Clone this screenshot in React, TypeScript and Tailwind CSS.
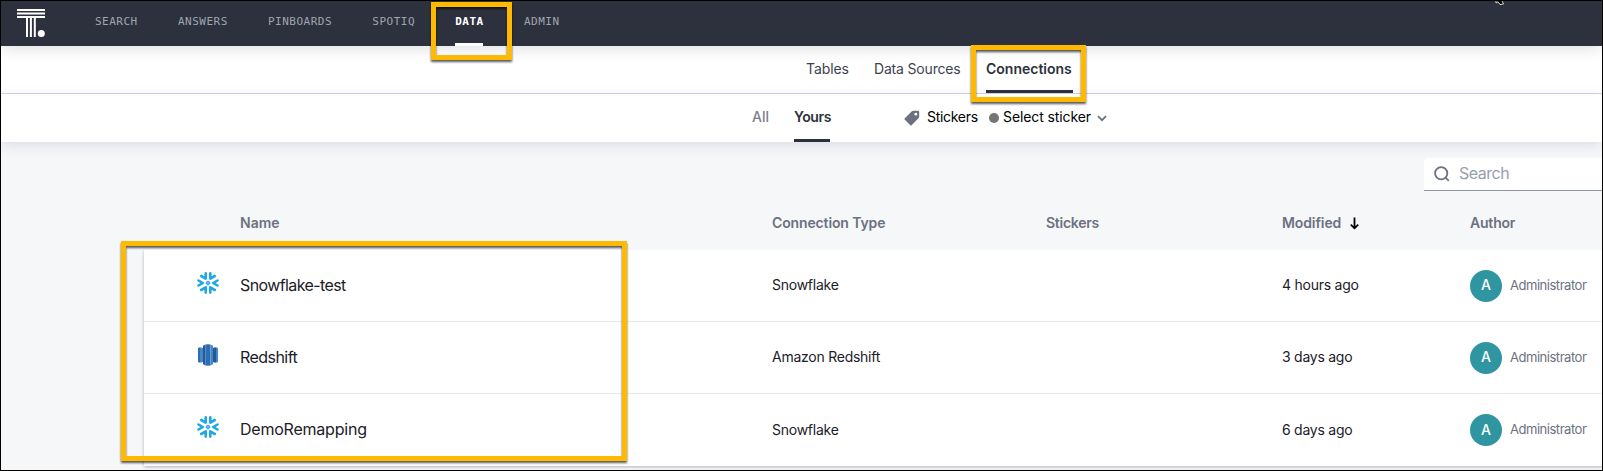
import React from "react";

const NAV = ["SEARCH", "ANSWERS", "PINBOARDS", "SPOTIQ", "DATA", "ADMIN"];

const ROWS = [
  { name: "Snowflake-test", type: "Snowflake", modified: "4 hours ago", spacing: "tracking-[-0.6px]" },
  { name: "Redshift", type: "Amazon Redshift", modified: "3 days ago", spacing: "tracking-[-0.55px]" },
  { name: "DemoRemapping", type: "Snowflake", modified: "6 days ago", spacing: "tracking-[-0.22px]" },
];

const COLS = "grid grid-cols-[96px_532px_274px_236px_188px_1fr]";

function Logo() {
  return (
    <svg width="28" height="28" viewBox="0 0 28 28" className="block">
      <g fill="#fff">
        <rect x="0" y="0" width="28" height="2" />
        <rect x="0" y="3.5" width="28" height="2" />
        <rect x="0" y="7" width="28" height="2" />
        <rect x="9" y="8" width="2" height="20" />
        <rect x="12.9" y="8" width="2" height="20" />
        <rect x="16.8" y="8" width="2" height="20" />
        <circle cx="24.3" cy="24.4" r="3.5" />
      </g>
    </svg>
  );
}

function SnowflakeIcon() {
  return (
    <svg width="22" height="22" viewBox="0 0 22 22" className="block">
      <g fill="none" stroke="#1fa8e6" strokeWidth="2.6" strokeLinecap="round" strokeLinejoin="round">
        <path d="M8.7 1.4V6.6L4.2 4" />
        <path d="M13.3 1.4V6.6L17.8 4" />
        <path d="M8.7 20.6V15.4L4.2 18" />
        <path d="M13.3 20.6V15.4L17.8 18" />
        <path d="M1.5 8.5L5.8 11L1.5 13.5" />
        <path d="M20.5 8.5L16.2 11L20.5 13.5" />
      </g>
      <path d="M11 9.2L12.8 11L11 12.8L9.2 11Z" fill="none" stroke="#1fa8e6" strokeWidth="1.3" strokeLinejoin="round" />
    </svg>
  );
}

function RedshiftIcon() {
  return (
    <svg width="22" height="22" viewBox="0 0 22 22" className="block">
      <path d="M1 4L3 3.3V18.7L1 18Z" fill="#2e6db4" />
      <path d="M3 3.3L6 4V18L3 18.7Z" fill="#4686c6" />
      <path d="M21 4L19 3.3V18.7L21 18Z" fill="#4686c6" />
      <path d="M19 3.3L15 4V18L19 18.7Z" fill="#205b99" />
      <path d="M6 1.8L8.5 0.6V21.4L6 20.2Z" fill="#205b99" />
      <path d="M8.5 0.6L11 0.2L13.5 0.6V21.4L11 21.8L8.5 21.4Z" fill="#2e6db4" />
      <path d="M13.5 0.6L16 1.8V20.2L13.5 21.4Z" fill="#4686c6" />
    </svg>
  );
}

function Header() {
  return (
    <header className="relative z-10 flex h-[45px] shrink-0 bg-[#2c313d] pl-4 shadow-[0_3px_14px_rgba(0,0,0,0.12)]">
      <div className="w-[78px] pt-2">
        <Logo />
      </div>
      <nav className="flex gap-[40.2px] font-['DejaVu_Sans_Mono',monospace] text-[11px] tracking-[0.5px]">
        {NAV.map((n) => (
          <a
            key={n}
            className={
              n === "DATA"
                ? "flex h-[45px] flex-col justify-between font-bold text-white"
                : "flex h-[45px] flex-col justify-between text-[#a0a5b0]"
            }
          >
            <span className="pt-[13px] leading-4">{n}</span>
            {n === "DATA" && <span className="block h-[3px] w-7 bg-white" />}
          </a>
        ))}
      </nav>
    </header>
  );
}

function Author() {
  return (
    <div className="flex items-center gap-2">
      <span className="flex size-8 items-center justify-center rounded-full bg-[#2f96a1] pb-[2px] text-[14px] font-medium text-white">A</span>
      <span className="text-[13px] tracking-[-0.47px] text-[#6b7180]">Administrator</span>
    </div>
  );
}

export default function App() {
  return (
    <div className="relative h-[471px] w-[1603px] overflow-hidden border border-black bg-[#f6f7f9] font-['Inter',sans-serif] text-[14px] text-[#1c2029]">
      <div className="flex h-full flex-col">
        <Header />
        <div className="flex h-[48px] shrink-0 border-b border-[#d4d4e2] bg-white pl-[805px] text-[#3d4352]">
          <span className="w-[68px] pt-[13px] leading-5 tracking-[-0.1px]">Tables</span>
          <span className="w-[112px] pt-[13px] leading-5 tracking-[-0.18px]">Data Sources</span>
          <span className="flex w-[87px] flex-col justify-between pt-[13px] font-semibold leading-5 text-[#2c313d]">
            Connections
            <span className="block h-[3px] bg-[#2c313d]" />
          </span>
        </div>
        <div className="relative flex h-[48px] shrink-0 bg-white pl-[751px] leading-5 shadow-[0_3px_12px_rgba(44,49,90,0.13)]">
          <span className="w-[42px] pt-[13px] font-medium text-[#7a808d]">All</span>
          <span className="flex w-9 flex-col justify-between pt-[13px] font-semibold tracking-[-0.4px] text-[#2c313d]">
            Yours
            <span className="block h-[3px] bg-[#2c313d]" />
          </span>
          <div className="flex h-[46px] items-center pl-[74px] text-black">
            <svg width="16" height="16" viewBox="0 0 16 16" className="mt-[2px]">
              <path d="M0.6 8.6L7.6 1.4Q8.3 0.8 9.2 0.8H14Q15.2 0.8 15.2 2V6.5Q15.2 7.4 14.6 8L7.6 15.2Q7 15.7 6.4 15.2L0.6 9.6Q0.2 9.1 0.6 8.6Z" fill="#6b7180" />
              <circle cx="11.8" cy="4.2" r="1.4" fill="#fff" />
            </svg>
            <span className="w-[69px] pl-[7px] tracking-[-0.3px]">Stickers</span>
            <span className="mr-1 mt-[2px] block size-[10px] rounded-full bg-[#757575]" />
            <span className="w-[94px] whitespace-nowrap tracking-[-0.1px]">Select sticker</span>
            <svg width="10" height="7" viewBox="0 0 10 7" className="mt-[2px]">
              <path d="M1 1.2L5 5.2L9 1.2" fill="none" stroke="#6b7180" strokeWidth="1.8" />
            </svg>
          </div>
        </div>
        <div className="flex shrink-0 justify-end pt-4">
          <div className="flex h-[33px] w-[178px] items-center rounded-tl-sm border-b border-[#9197a8] bg-white pl-[10px]">
            <svg width="16" height="16" viewBox="0 0 16 16">
              <circle cx="7.2" cy="7.2" r="6.1" fill="none" stroke="#6b7180" strokeWidth="1.8" />
              <path d="M11.3 11.3L14.8 14.8" stroke="#6b7180" strokeWidth="1.8" />
            </svg>
            <span className="pb-[2px] pl-[9px] text-[16px] tracking-[-0.5px] text-[#989eae]">Search</span>
          </div>
        </div>
        <div className="relative z-10 flex h-[59px] shrink-0 flex-col bg-[#f6f7f9] pl-[143px] pt-[22px]">
          <div className={`${COLS} font-semibold leading-5 text-[#6b7180]`}>
            <span />
            <span>Name</span>
            <span className="tracking-[-0.13px]">Connection Type</span>
            <span className="tracking-[-0.25px]">Stickers</span>
            <span className="flex items-center gap-[9px] tracking-[-0.1px]">
              Modified
              <svg width="9" height="13" viewBox="0 0 9 13">
                <path d="M4.5 0.5V11M0.8 7.6L4.5 11.3L8.2 7.6" fill="none" stroke="#000" strokeWidth="1.8" />
              </svg>
            </span>
            <span className="tracking-[-0.2px]">Author</span>
          </div>
        </div>
        <div className="ml-[143px] shrink-0 bg-white shadow-[0_1px_3px_rgba(44,49,60,0.35)]">
          {ROWS.map((r) => (
            <div key={r.name} className={`${COLS} h-[72px] items-center border-b border-[#e6e8ed] last:border-0`}>
              <div className="pb-[6px] pl-[53px]">{r.name === "Redshift" ? <RedshiftIcon /> : <SnowflakeIcon />}</div>
              <span className={`pb-[2px] text-[16px] ${r.spacing}`}>{r.name}</span>
              <span className="pb-[2px] tracking-[-0.25px]">{r.type}</span>
              <span />
              <span className="pb-[2px] tracking-[-0.25px]">{r.modified}</span>
              <Author />
            </div>
          ))}
        </div>
      </div>

      <div className="absolute left-[430px] top-px z-20 h-[58px] w-[81px] border-5 border-[#ffb900] drop-shadow-[0_2px_1px_rgba(0,0,0,0.65)]" />
      <div className="absolute left-[970px] top-[44px] z-20 h-[57px] w-[115px] border-5 border-[#ffb900] drop-shadow-[0_2px_1px_rgba(0,0,0,0.65)]" />
      <div className="absolute left-[120px] top-[240px] z-20 h-[220px] w-[506px] border-5 border-[#ffb900] drop-shadow-[0_2px_1px_rgba(0,0,0,0.65)]" />
      <svg width="10" height="5" viewBox="0 0 10 5" className="absolute left-[1494px] top-[-1px] z-20">
        <path d="M1 0V3L3 1.8L5 4.6L8.5 4L6.5 0Z" fill="#000" stroke="#d8d8d8" strokeWidth="1" />
      </svg>
    </div>
  );
}
